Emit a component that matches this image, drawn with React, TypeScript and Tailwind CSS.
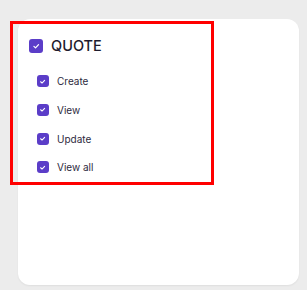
import React from "react";

function Box({ size }: { size: number }) {
  return (
    <span
      className="flex items-center justify-center rounded-[3px] bg-[#5b3dc8] shrink-0"
      style={{ width: size, height: size }}
    >
      <svg width={size * 0.6} height={size * 0.6} viewBox="0 0 10 10" fill="none">
        <path d="M2.3 5.2 L4.2 7 L7.8 3.2" stroke="white" strokeWidth="1.5" strokeLinecap="round" strokeLinejoin="round" />
      </svg>
    </span>
  );
}

export default function App() {
  const items = ["Create", "View", "Update", "View all"];
  return (
    <div className="relative w-[307px] h-[290px] bg-[#ececec] overflow-hidden" style={{ fontFamily: "Inter, 'Noto Sans', sans-serif" }}>
      <div className="pt-[19px] pl-[18px]">
        <div className="w-[281px] h-[266px] bg-white rounded-[12px] shadow-[0_1px_2px_rgba(0,0,0,0.06)] pt-[20px] pl-[11px]">
          <div className="flex items-center h-[14px] gap-[8px]">
            <Box size={14} />
            <span className="text-[14.5px] font-medium text-[#1e1b2e] leading-none mt-[1px]">QUOTE</span>
          </div>
          <div className="mt-[14px] ml-[8px] flex flex-col">
            {items.map((t) => (
              <div key={t} className="flex items-center h-[28.7px] gap-[8px]">
                <Box size={12} />
                <span className="text-[10px] text-[#2d2a3e] leading-none">{t}</span>
              </div>
            ))}
          </div>
        </div>
      </div>
      <div className="absolute left-[10px] top-[21px] w-[204px] h-[164px] border-[3px] border-[#ff0000]" />
    </div>
  );
}
